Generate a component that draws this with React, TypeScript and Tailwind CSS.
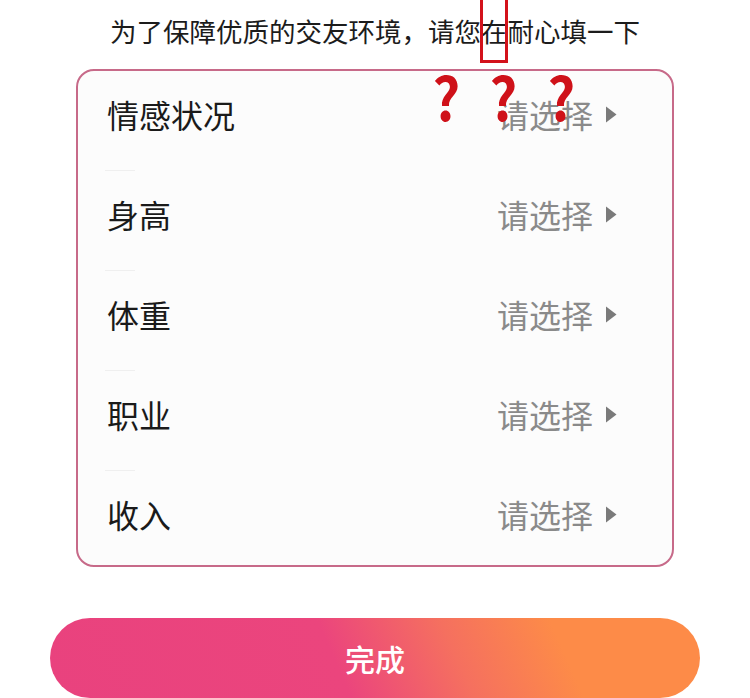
import React from "react";

const rows = ["情感状况", "身高", "体重", "职业", "收入"];

const Caret = () => (
  <svg width="12" height="17" viewBox="0 0 12 17" className="ml-[12px]">
    <path d="M1 0.5 L11.5 8.5 L1 16.5 Z" fill="#7a7a7a" />
  </svg>
);

const App: React.FC = () => {
  return (
    <div
      className="relative h-[698px] w-[750px] overflow-hidden bg-white"
      style={{ fontFamily: '"Noto Sans CJK SC", "Noto Sans", sans-serif' }}
    >
      {/* Title */}
      <p className="pt-[11px] text-center text-[26.5px] leading-[40px] text-[#1c1c1c]">
        为了保障优质的交友环境，请您在耐心填一下
      </p>

      {/* Form card */}
      <div className="mx-[76px] mt-[18px] rounded-[18px] border-2 border-[#c76a89] bg-[#fcfcfc]">
        {rows.map((label, i) => (
          <div key={label} className="flex flex-col">
            {i > 0 && <div className="ml-[27px] h-px w-[30px] bg-[#efefef]" />}
            <div
              className={`flex items-center justify-between pl-[29px] pr-[55px] ${
                i === rows.length - 1 ? "h-[94px] pb-[8px]" : "h-[99px] pb-[13px]"
              }`}
            >
              <span className="text-[32px] text-[#1a1a1a]">{label}</span>
              <div className="flex items-center">
                <span className="text-[32px] text-[#8a8a8a]">请选择</span>
                <Caret />
              </div>
            </div>
          </div>
        ))}
      </div>

      {/* Submit button */}
      <div className="mx-[50px] mt-[51px] flex h-[80px] items-center justify-center rounded-full bg-[linear-gradient(66deg,#e9427e_0%,#eb457d_44%,#f5705f_62%,#fd8b48_78%,#fd8b48_100%)]">
        <span className="text-[30px] font-medium text-white">完成</span>
      </div>

      {/* Red annotations over the screenshot */}
      <div className="absolute left-[480px] top-[-3px] h-[66px] w-[28px] border-[3px] border-[#d3121b]" />
      {[431, 488, 546].map((x) => (
        <span
          key={x}
          className="absolute top-[65px] scale-x-90 text-[60px] font-bold leading-none text-[#cf1119]"
          style={{ left: x }}
        >
          ?
        </span>
      ))}
    </div>
  );
};

export default App;
